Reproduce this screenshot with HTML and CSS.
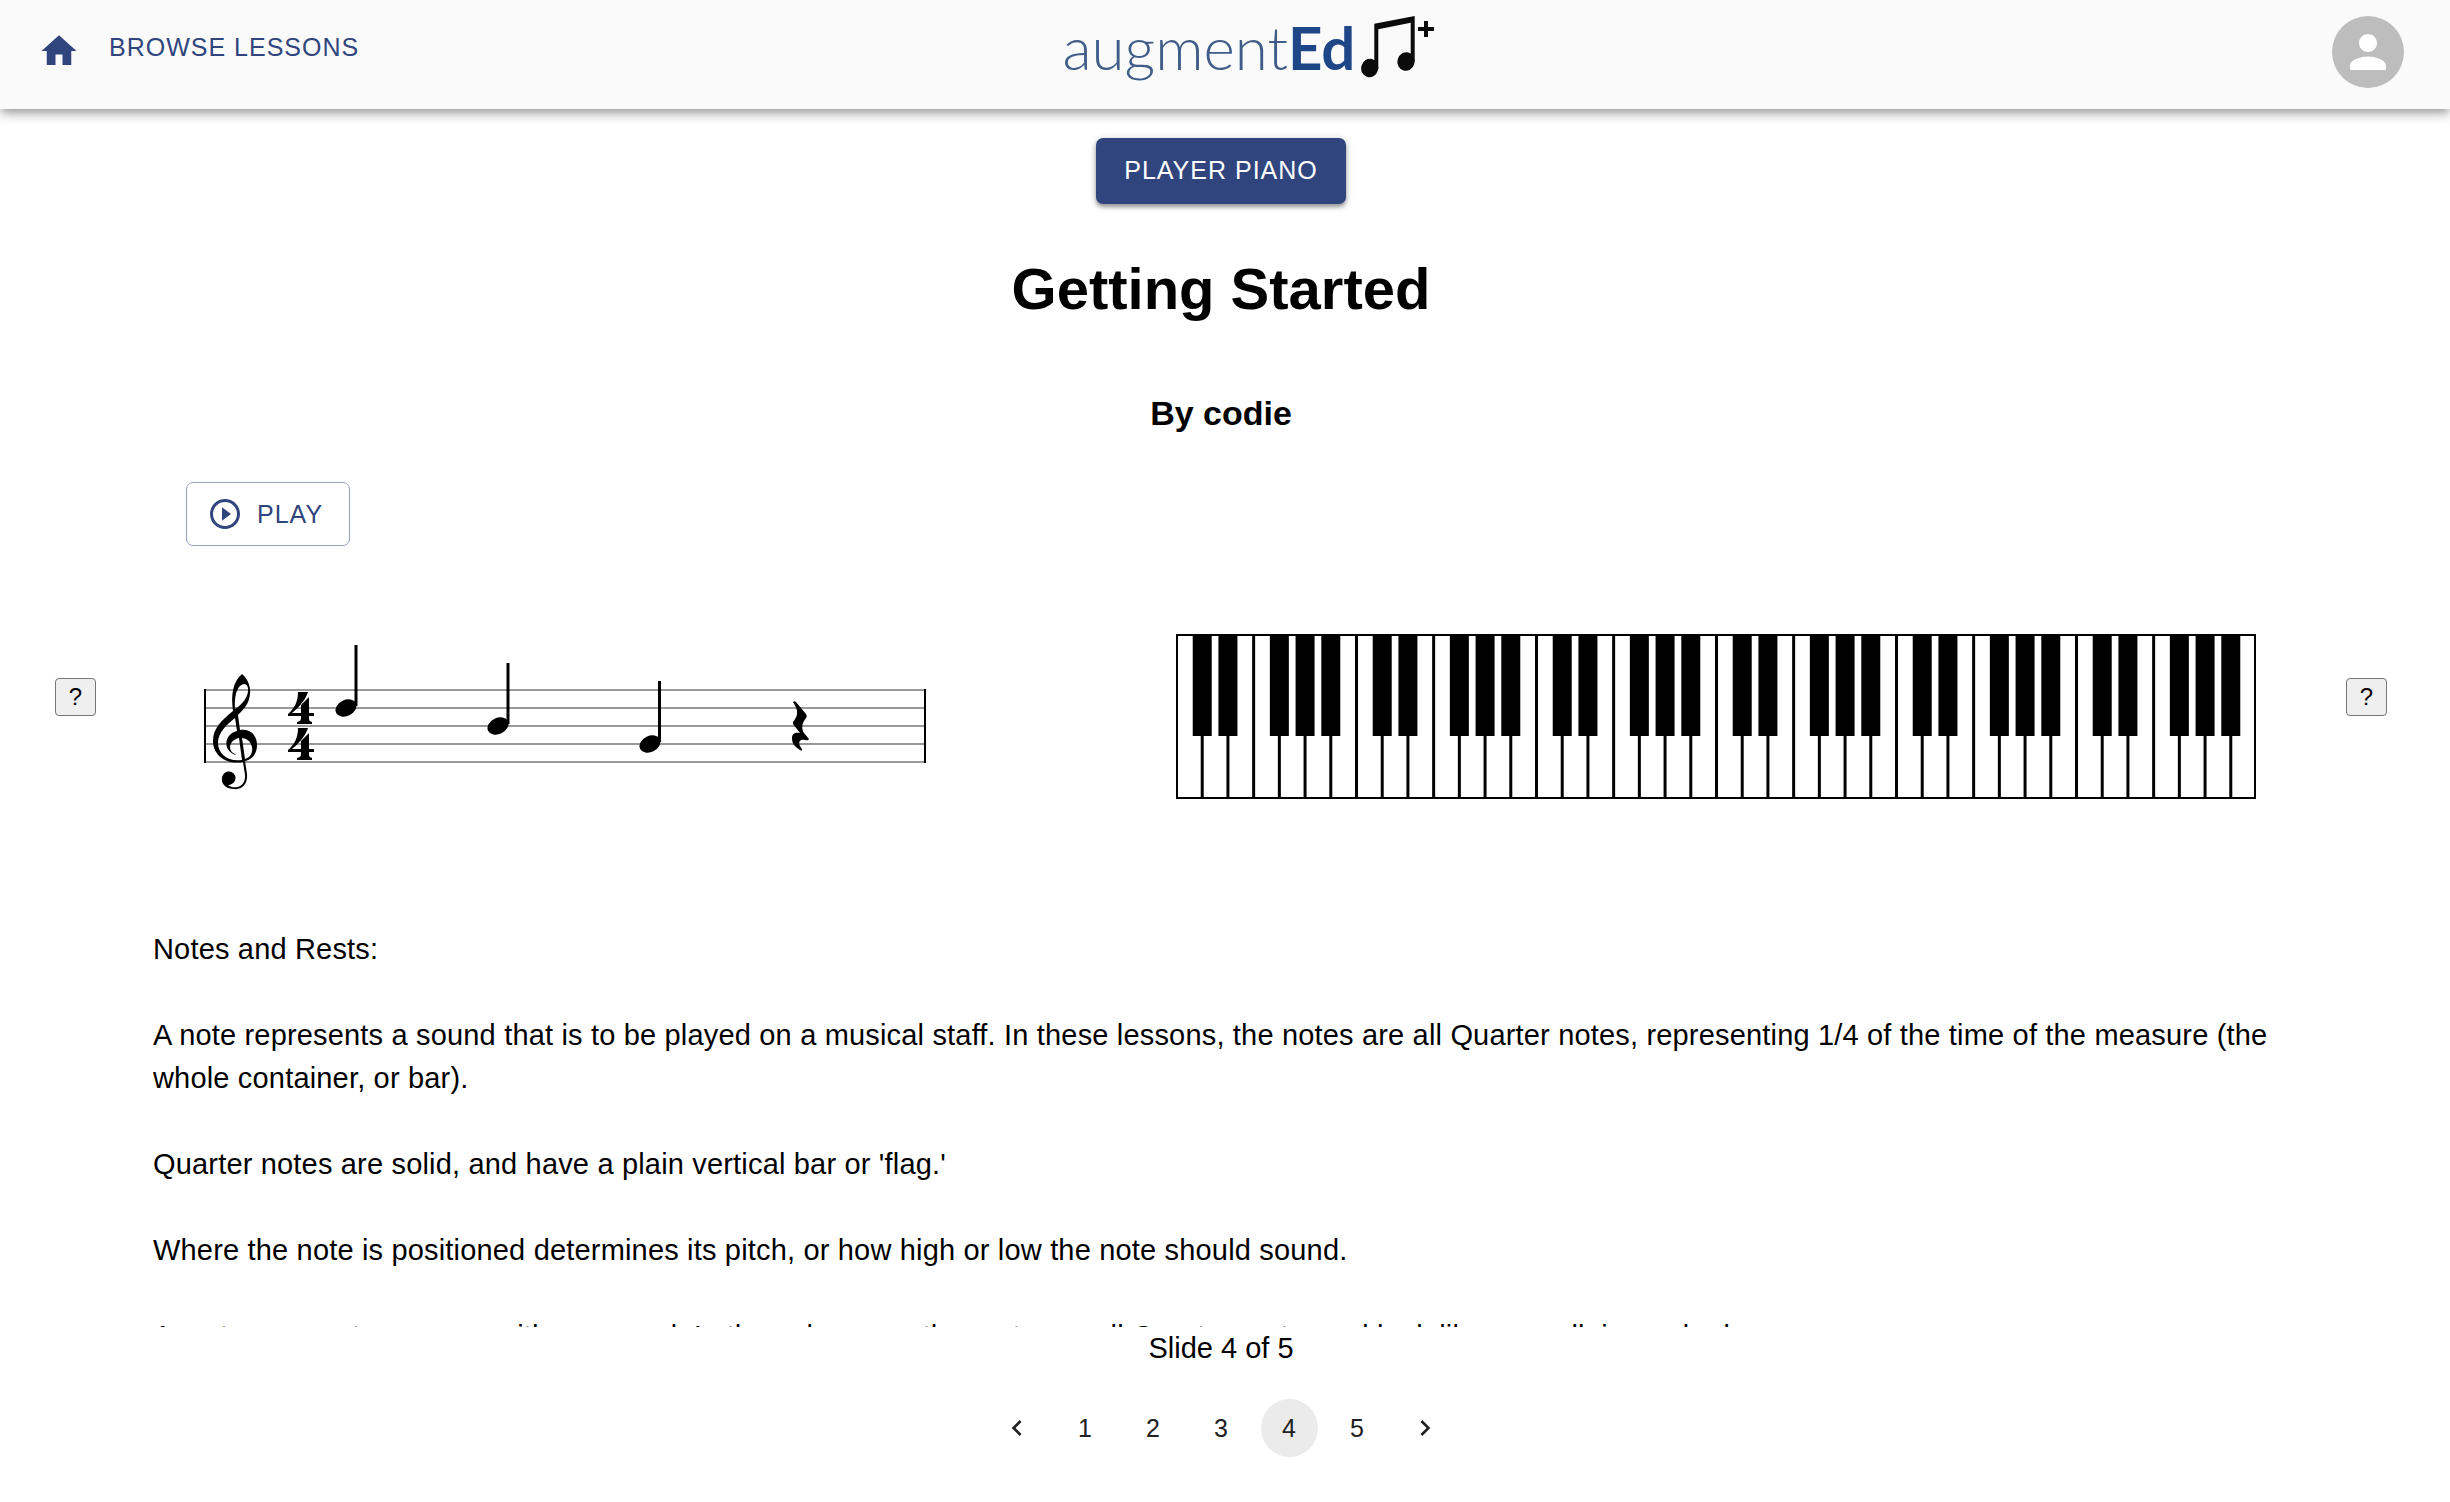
FILE: index.html
```html
<!DOCTYPE html>
<html lang="en">
<head>
<meta charset="utf-8">
<title>augmentEd – Getting Started</title>
<link rel="stylesheet" href="styles.css">
</head>
<body>
<header class="appbar">
  <nav class="nav">
    <a class="home" href="#" aria-label="Home"><svg viewBox="0 0 24 24"><path d="M10 20v-6h4v6h5v-8h3L12 3 2 12h3v8z"/></svg></a>
    <a class="browse" href="#">BROWSE LESSONS</a>
  </nav>
  <a class="logo" href="#"><span class="logo-text">augment<b>Ed</b></span><svg class="logo-notes" viewBox="0 0 74 66" aria-hidden="true"><path d="M13.300 9.700L53.700 2V48H49.700V8.700L17.300 15.300V55H13.300Z"/><ellipse cx="8.700" cy="54" rx="8.500" ry="9.300" transform="rotate(15 8.700 54)"/><ellipse cx="45" cy="47.500" rx="8.600" ry="9.400" transform="rotate(15 45 47.500)"/><path d="M57 15h16M65 7v16" fill="none" stroke="#0b0b0b" stroke-width="4"/></svg></a>
  <button class="avatar" aria-label="Account"><svg viewBox="0 0 24 24"><path d="M12 12c2.210 0 4-1.790 4-4s-1.790-4-4-4-4 1.790-4 4 1.790 4 4 4zm0 2c-2.670 0-8 1.340-8 4v2h16v-2c0-2.660-5.330-4-8-4z"/></svg></button>
</header>
<main class="lesson">
  <button class="piano-button">PLAYER PIANO</button>
  <h1>Getting Started</h1>
  <h2>By codie</h2>
  <div class="toolbar">
    <button class="play"><svg viewBox="0 0 24 24" aria-hidden="true"><path d="M10 16.500l6-4.500-6-4.500v9zM12 2C6.480 2 2 6.480 2 12s4.480 10 10 10 10-4.480 10-10S17.520 2 12 2zm0 18c-4.410 0-8-3.590-8-8s3.590-8 8-8 8 3.590 8 8-3.590 8-8 8z"/></svg>PLAY</button>
  </div>
  <section class="stage">
    <button class="help">?</button>
    <svg class="staff" viewBox="0 0 724 150" role="img" aria-label="Treble clef, four four time: D, B, G, quarter rest">
      <path d="M1 46H722M1 64H722M1 82H722M1 100H722M1 118H722" stroke="#999" stroke-width="2"/>
      <path d="M1 45V119M721 45V119" stroke="#000" stroke-width="2"/>
      <path fill-rule="evenodd" d="M38 30C44 35 47 43 46 50C45 60 40 65 34 71L36 86C46 84 53 91 53 101C53 109 49 115 41 117L43 130C44 141 37 146 30 145C22 145 17 140 18 134C19 129 23 127 26 128C31 129 33 136 29 139C26 141 25 141 24 141C30 146 42 143 41 131L39 118C23 121 9 112 9 97C9 84 18 76 29 67C27 54 28 38 38 30ZM40 40C33 41 30 52 31 65C39 60 45 52 44 44C43 41 42 40 40 40ZM31 74C22 81 14 89 14 99C14 110 24 118 38 116L35 94C25 96 23 107 31 110L32 111C18 107 20 90 33 87ZM38 94L41 115C52 112 50 95 38 94Z"/>
      <circle cx="25" cy="134" r="6.500"/>
      <path d="M94 48H104C101 57 94 64 88 69H97V61L105 53V69H110V72H105C105 76 105 77 108 78V80H93V78C97 77 97 76 97 72H84V70C91 64 94 57 94 48Z"/>
      <path d="M94 84H104C101 93 94 100 88 105H97V97L105 89V105H110V108H105C105 112 105 113 108 114V116H93V114C97 113 97 112 97 108H84V106C91 100 94 93 94 84Z"/>
      <path d="M152 1V62M304 19V80M455.500 37V98" stroke="#000" stroke-width="3"/>
      <g><ellipse cx="142" cy="64" rx="11" ry="8" transform="rotate(-25 142 64)"/><ellipse cx="294" cy="82" rx="11" ry="8" transform="rotate(-25 294 82)"/><ellipse cx="446" cy="100" rx="11" ry="8" transform="rotate(-25 446 100)"/></g>
      <path d="M589 58C590 57 591 57 592 58L602 70C603 72 603 73 602 74C598 79 597 84 600 89L605 95C604 97 603 96 601 96C596 95 594 98 596 102L598 105C598 107 597 107 596 106C590 102 588 99 588 94C588 89 592 88 596 89L589 80V78C594 72 595 67 589 58Z"/>
    </svg>
    <svg class="piano" id="piano" viewBox="0 0 1080 165" role="img" aria-label="Piano keyboard"></svg>
    <button class="help">?</button>
  </section>
  <article class="copy">
    <p>Notes and Rests:</p>
    <p>A note represents a sound that is to be played on a musical staff. In these lessons, the notes are all Quarter notes, representing 1/4 of the time of the measure (the whole container, or bar).</p>
    <p>Quarter notes are solid, and have a plain vertical bar or 'flag.'</p>
    <p>Where the note is positioned determines its pitch, or how high or low the note should sound.</p>
    <p>A rest represents a pause with no sound. In these lessons, the rests are all Quarter rests, and look like a small, jagged edge.</p>
  </article>
  <p class="counter">Slide 4 of 5</p>
  <nav class="pages" aria-label="Slides">
    <button aria-label="Previous"><svg viewBox="0 0 24 24"><path d="M15.410 7.410L14 6l-6 6 6 6 1.410-1.410L10.830 12z"/></svg></button>
    <button>1</button><button>2</button><button>3</button><button class="current" aria-current="page">4</button><button>5</button>
    <button aria-label="Next"><svg viewBox="0 0 24 24"><path d="M10 6L8.590 7.410 13.170 12l-4.580 4.590L10 18l6-6z"/></svg></button>
  </nav>
</main>
<script src="piano.js"></script>
</body>
</html>
```
FILE: piano.js
```js
// Draws a 42-key keyboard: white keys first, then the black keys over them.
const svg = document.getElementById('piano');
const WHITE_KEYS = 42;
const step = 1080 / WHITE_KEYS;
function rect(x, y, w, h, fill) {
  const r = document.createElementNS('http://www.w3.org/2000/svg', 'rect');
  Object.entries({ x, y, width: w, height: h, fill }).forEach(([k, v]) => r.setAttribute(k, v));
  svg.appendChild(r);
}
rect(0, 0, 1080, 165, '#000');
for (let i = 0; i < WHITE_KEYS; i++) {
  rect(i * step + 2, 2, step - (i === WHITE_KEYS - 1 ? 4 : 3), 161, '#fff');
}
for (let i = 0; i < WHITE_KEYS - 1; i++) {
  if (![2, 6].includes(i % 7)) rect((i + 1) * step - 9, 0, 19, 102, '#000');
}
```
FILE: styles.css
```css
* { box-sizing: border-box; }
body { margin: 0; font-family: "Liberation Sans", Arial, sans-serif; color: #000; background: #fff; }
button { font: inherit; cursor: pointer; }
a { color: #30457d; text-decoration: none; }
svg { display: block; }
.appbar { display: grid; grid-template-columns: 1fr auto 1fr; height: 109px; padding: 0 46px 0 38px; background: #fafafa; box-shadow: 0 4px 8px -2px rgba(0,0,0,.3), 0 8px 10px rgba(0,0,0,.1), 0 2px 16px rgba(0,0,0,.1); }
.nav { display: flex; align-items: flex-start; gap: 29px; padding-top: 30px; }
.home svg { width: 42px; height: 42px; fill: #30457d; }
.browse { font-size: 25px; line-height: 34px; letter-spacing: 1px; }
.logo { display: flex; align-items: flex-start; gap: 6px; padding: 14px 0 0 56px; }
.logo-text { font-family: Lato, sans-serif; font-weight: 300; font-size: 60px; line-height: 66px; color: #3f5d88; }
.logo-text b { font-weight: 700; color: #1f4788; }
.logo-notes { width: 74px; height: 66px; fill: #0b0b0b; }
.avatar { justify-self: end; margin-top: 16px; width: 72px; height: 72px; padding: 9px; border: 0; border-radius: 50%; background: #bdbdbd; }
.avatar svg { fill: #fff; }
.lesson { padding: 0 63px 0 55px; display: flex; flex-direction: column; align-items: center; }
.piano-button { margin-top: 29px; height: 66px; padding: 0 28px 2px; border: 0; border-radius: 7px; background: #30457d; color: #fff; font-size: 25px; letter-spacing: 1px; box-shadow: 0 3px 4px rgba(0,0,0,.35), 0 1px 8px rgba(0,0,0,.16); }
h1 { margin: 46px 0 0; font-size: 58px; line-height: 78px; }
h2 { margin: 64px 0 0; font-size: 34px; line-height: 42px; }
.toolbar { align-self: stretch; margin-top: 48px; padding-left: 131px; }
.play { display: flex; align-items: center; gap: 14px; height: 64px; padding: 0 26px 0 20px; border: 1px solid #97a2be; border-radius: 7px; background: #fff; color: #30457d; font-size: 25px; letter-spacing: 1px; }
.play svg { width: 36px; height: 36px; fill: #30457d; }
.stage { align-self: stretch; display: flex; align-items: flex-start; margin-top: 88px; }
.help { width: 41px; height: 38px; margin-top: 44px; padding: 0; border: 1px solid #767676; border-radius: 4px; background: #efefef; font-size: 24px; line-height: 32px; }
.staff { flex: 724 1 0; min-width: 0; margin: 10px 248px 0 108px; }
.piano { flex: 1080 1 0; min-width: 0; margin-right: 90px; }
.copy { align-self: stretch; height: 399px; margin: 129px 90px 0 98px; overflow-y: auto; scrollbar-width: none; font-size: 29px; line-height: 43px; letter-spacing: 0.006em; }
.copy p { margin: 0 0 43px; }
.counter { margin: 0; font-size: 29px; line-height: 43px; }
.pages { display: flex; gap: 11px; margin-top: 29px; }
.pages button { display: grid; place-items: center; width: 57px; height: 58px; padding: 0; border: 0; border-radius: 50%; background: none; font-size: 25px; color: #212121; }
.pages .current { background: #ebebeb; }
.pages svg { width: 32px; height: 32px; fill: #212121; }
```
